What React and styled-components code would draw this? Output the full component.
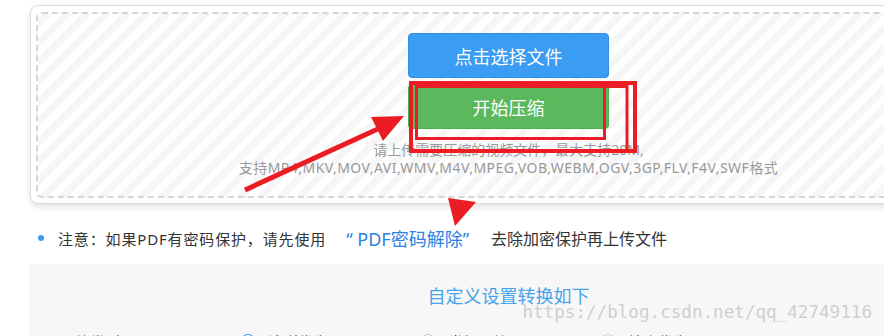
import React from 'react'
import styled, { createGlobalStyle } from 'styled-components'

const GlobalStyle = createGlobalStyle`
  html, body {
    margin: 0;
    padding: 0;
    background: #fff;
    overflow: hidden;
  }
  body {
    font-family: "Noto Sans", "Noto Sans CJK SC", sans-serif;
    color: #333;
  }
`

const Page = styled.div`
  position: relative;
  width: 884px;
  height: 336px;
  overflow: hidden;
`

const Wrapper = styled.div`
  width: 959px;
  padding: 5px 0 0 29px;
`

const UploadCard = styled.div`
  margin: 0 1px;
  padding: 6px 5px 5px;
  border: 1px solid #dcdcdc;
  border-radius: 8px;
  background: #fff;
  box-shadow: 0 3px 6px rgba(0, 0, 0, 0.12);
`

const DropZone = styled.div`
  display: flex;
  flex-direction: column;
  align-items: center;
  gap: 6px;
  padding: 19px 0;
  border: 2px dashed #d6d6d6;
  border-radius: 6px;
  background: repeating-linear-gradient(-45deg, #f6f6f6 0 7px, #fff 7px 14px);
`

const Button = styled.button`
  width: 201px;
  height: 45px;
  border: 1px solid ${p => p.$border};
  border-radius: 4px;
  background: ${p => p.$bg};
  color: #fff;
  font-family: inherit;
  font-size: 18px;
  padding: 0;
`

const Hint = styled.div`
  margin-top: 6px;
  font-size: 14px;
  line-height: 18px;
  color: #999;
  text-align: center;
`

const HintLine = styled.div`
  letter-spacing: ${p => p.$spacing || 0};
`

const Notice = styled.div`
  display: flex;
  align-items: center;
  height: 24px;
  margin-top: 22px;
  font-size: 15px;
  color: #333;
`

const Dot = styled.span`
  width: 6px;
  height: 6px;
  border-radius: 50%;
  background: #3a9bf0;
  margin: 0 14px 0 9px;
`

const NoticeText = styled.span`
  letter-spacing: 0.85px;
`

const Link = styled.span`
  margin-left: 20px;
  font-size: 18px;
  color: #2b82e4;
`

const Tail = styled.span`
  margin-left: 22px;
  font-size: 16px;
`

const Settings = styled.div`
  margin-top: 14px;
  padding: 20px 0 0 31px;
  height: 100px;
  background: #f7f7f7;
`

const Title = styled.div`
  margin-left: -31px;
  font-size: 18px;
  line-height: 24px;
  color: #45a3ec;
  text-align: center;
`

const OptionRow = styled.div`
  display: flex;
  align-items: center;
  margin-top: 22px;
  font-size: 15px;
  line-height: 24px;
  color: #333;
`

const RowLabel = styled.span`
  width: 180px;
`

const Option = styled.label`
  display: flex;
  align-items: center;
  gap: 12px;
  width: 180px;
`

const Radio = styled.span`
  width: 14px;
  height: 14px;
  border-radius: 50%;
  border: 1px solid ${p => (p.$checked ? '#3a9bf0' : '#c8c8c8')};
  background: #fff;
`

const Watermark = styled.div`
  position: absolute;
  right: 12px;
  top: 302px;
  font-family: "DejaVu Sans Mono", "Liberation Mono", monospace;
  font-size: 17.6px;
  white-space: nowrap;
  color: #cfcfcf;
  pointer-events: none;
`

const Marks = styled.svg`
  position: absolute;
  left: 0;
  top: 0;
  pointer-events: none;
`

export default function App() {
  return (
    <Page>
      <GlobalStyle />
      <Wrapper>
        <UploadCard>
          <DropZone>
            <Button $bg="#3a9cf2" $border="#2f8fe4">点击选择文件</Button>
            <Button $bg="#5cb85c" $border="#4cae4c">开始压缩</Button>
            <Hint>
              <HintLine>请上传需要压缩的视频文件，最大支持20M,</HintLine>
              <HintLine $spacing="0.47px">
                支持MP4,MKV,MOV,AVI,WMV,M4V,MPEG,VOB,WEBM,OGV,3GP,FLV,F4V,SWF格式
              </HintLine>
            </Hint>
          </DropZone>
        </UploadCard>
        <Notice>
          <Dot />
          <NoticeText>注意：如果PDF有密码保护，请先使用</NoticeText>
          <Link>“ PDF密码解除”</Link>
          <Tail>去除加密保护再上传文件</Tail>
        </Notice>
        <Settings>
          <Title>自定义设置转换如下</Title>
          <OptionRow>
            <RowLabel>压缩类型：</RowLabel>
            <Option><Radio $checked />清晰优先</Option>
            <Option><Radio />常规压缩</Option>
            <Option><Radio />较小优先</Option>
          </OptionRow>
        </Settings>
      </Wrapper>
      <Watermark>https://blog.csdn.net/qq_42749116</Watermark>
      <Marks width="884" height="336" viewBox="0 0 884 336">
        <g fill="none" stroke="#ec1c24">
          <rect x="411" y="83" width="224" height="68" strokeWidth="4" />
          <rect x="416.5" y="86.5" width="188" height="52" strokeWidth="3" />
          <line x1="415" y1="86.5" x2="628" y2="86.5" strokeWidth="3" />
          <line x1="627" y1="85" x2="627" y2="152" strokeWidth="3" />
          <line x1="245" y1="190" x2="380" y2="128" strokeWidth="5" />
        </g>
        <g fill="#ec1c24">
          <polygon points="404,116 371,117 383,141" />
          <polygon points="448,198 476,202 455,226" />
        </g>
      </Marks>
    </Page>
  )
}
